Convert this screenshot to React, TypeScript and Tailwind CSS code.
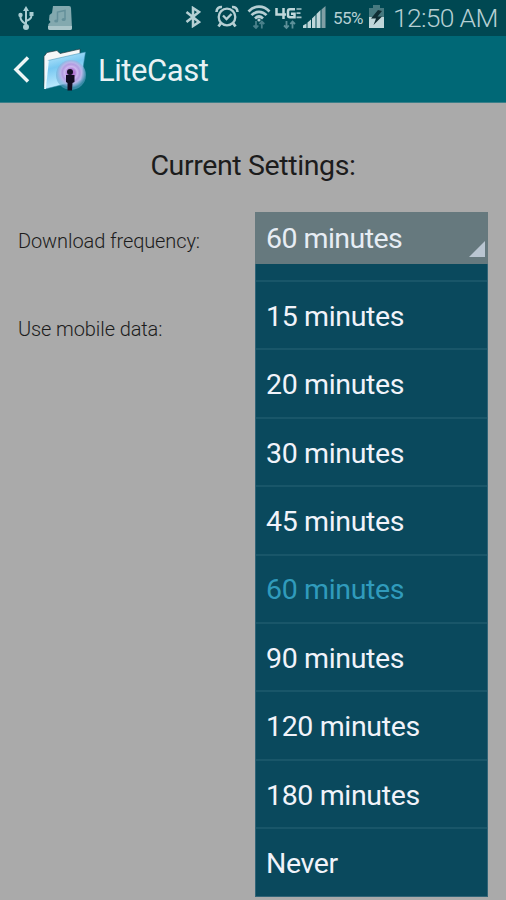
import React, { useState } from 'react';

const options = [
  '15 minutes',
  '20 minutes',
  '30 minutes',
  '45 minutes',
  '60 minutes',
  '90 minutes',
  '120 minutes',
  '180 minutes',
  'Never'
];

const UsbIcon = () => (
  <svg className="w-4 h-6" viewBox="0 0 16 24" fill="none" stroke="#a9cdd2" strokeWidth="2">
    <path d="M8 4v16M8 18C5 16 2.500 15.500 2.500 11M8 15c3.500-1.500 5.500-2.500 5.500-6" />
    <path d="M5 5 8 0l3 5z" fill="#a9cdd2" stroke="none" />
    <circle cx="2.500" cy="9" r="2.200" fill="#a9cdd2" stroke="none" />
    <path d="M11.500 6h4v4h-4z" fill="#a9cdd2" stroke="none" />
    <circle cx="8" cy="21" r="3" fill="#a9cdd2" stroke="none" />
  </svg>
);

const MusicCardIcon = () => (
  <svg className="w-[26px] h-6" viewBox="0 0 26 24">
    <path d="M6 0h16q2 0 2 2l1 20q0 2-2 2H3q-2 0-2-2l.500-4 2-2-1.500-2 .500-5 2.500-2z" fill="#83a9af" />
    <path d="M1 20h24v2q0 2-2 2H3q-2 0-2-2z" fill="#aac5c9" />
    <path d="M10.500 14.500V6l7.500-1.500v8.500" fill="none" stroke="#64909a" strokeWidth="1.500" />
    <ellipse cx="9.200" cy="15" rx="2" ry="1.600" fill="#64909a" />
    <ellipse cx="16.700" cy="13.500" rx="2" ry="1.600" fill="#64909a" />
  </svg>
);

const BluetoothIcon = () => (
  <svg className="w-4 h-[22px]" viewBox="0 0 16 22" fill="none" stroke="#b5cfd3" strokeWidth="2.500">
    <path d="M1.500 6l12.500 10-6 4V2l6 4L1.500 16" />
  </svg>
);

const AlarmIcon = () => (
  <svg className="w-6 h-[23px]" viewBox="0 0 24 23" fill="none" stroke="#b5cfd3" strokeWidth="2.300">
    <circle cx="12" cy="12" r="8.300" />
    <path d="M8 10.500l3.500 3.500 5-5" />
    <path d="M1.500 7C1.500 3.500 4 1.700 7 2M22.500 7c0-3.500-2.500-5.300-5.500-5" strokeWidth="2.600" />
    <path d="M6 18 3.500 21.500M18 18l2.500 3.500" strokeWidth="2.800" />
  </svg>
);

const WifiIcon = () => (
  <svg className="w-6 h-6" viewBox="0 0 24 24" fill="none" stroke="#b5cfd3" strokeWidth="2.600">
    <path d="M1.500 6.500C7.500 0 16.500 0 22.500 6.500M4.500 10.200c4.200-4.500 10.800-4.500 15 0M8 13.500c2.500-2.500 5.500-2.500 8 0" />
    <circle cx="12" cy="15" r="1.600" fill="#b5cfd3" stroke="none" />
    <path d="M9 16v7M6.500 20.500 9 23l2.300-2.500M14.800 23.500v-7M12.500 19l2.300-2.500 2.500 2.500" stroke="#49808a" strokeWidth="1.800" />
  </svg>
);

const LteIcon = () => (
  <svg className="w-[27px] h-6" viewBox="0 0 27 24" fill="none" stroke="#c0d7da" strokeWidth="2.500">
    <path d="M1.500 1v6.500H11M8.500 1v11M20 2.200h-5q-2 0-2 2v4q0 2 2 2h4.500V6.800H16" />
    <path d="M21.500 2h5M21.500 6.200h4M21.500 10.400h5" stroke="#a3c2c7" strokeWidth="1.700" />
    <path d="M11.500 14v7M9 18.500l2.500 2.500 2.300-2.500M17.500 21.500v-7M15.300 17l2.200-2.500 2.500 2.500" stroke="#5d9099" strokeWidth="1.800" />
  </svg>
);

const SignalIcon = () => (
  <svg className="w-[23px] h-[22px]" viewBox="0 0 23 22">
    <path d="M0 22v-2.500l3.500-2V22zM4.500 22v-5.500l3.500-3V22zM9 22V12.500l3.500-3.500V22zM13.500 22V8L17.500 4v18z" fill="#c0d7da" />
    <path d="M18.500 22V3.500L22.500 0v22z" fill="#7f9fa5" />
  </svg>
);

const BatteryIcon = () => (
  <svg className="w-[17px] h-[23px]" viewBox="0 0 17 23">
    <path d="M5 0h7v3h4v10H1V3h4z" fill="#477a80" />
    <path d="M1 12h15v11H1z" fill="#c0d7da" />
    <path d="M10 5 3 13.500h5L5.500 20 14 11.500H9.500L14 6z" fill="#102e34" />
  </svg>
);

const FolderIcon = () => (
  <svg className="w-11 h-[43px]" viewBox="0 0 44 43">
    <defs>
      <linearGradient id="folder" x1="0" y1="0" x2="0.300" y2="1">
        <stop offset="0" stopColor="#c9efff" />
        <stop offset="0.450" stopColor="#78c8f1" />
        <stop offset="1" stopColor="#c7efff" />
      </linearGradient>
      <radialGradient id="waves" cy="0.430">
        <stop offset="0" stopColor="#a650bb" />
        <stop offset="0.300" stopColor="#b68ada" />
        <stop offset="0.420" stopColor="#cdb9ee" />
        <stop offset="0.580" stopColor="#b39be0" />
        <stop offset="0.700" stopColor="#b9b5e8" />
        <stop offset="0.880" stopColor="#8eb4e0" stopOpacity="0.750" />
        <stop offset="1" stopColor="#69a8cf" stopOpacity="0.550" />
      </radialGradient>
    </defs>
    <path d="M1 8.500 4 4.500 14 2.500l3 3L37 1v8L3 41l-2-2z" fill="#f5f7f8" stroke="#263d45" strokeWidth="0.700" />
    <path d="M5 12.500 42.500 4 38 32 2 41z" fill="url(#folder)" stroke="#388bad" strokeWidth="0.500" />
    <path d="M5 12.500 2 41" stroke="#e9faff" strokeWidth="1.800" />
    <circle cx="28" cy="27" r="15" fill="url(#waves)" />
    <circle cx="27" cy="24" r="3" fill="#160e24" />
    <path d="M23 27h8.500v7l-2 1-.500 7.500h-4.500L24.500 35l-1.500-1z" fill="#120c20" />
  </svg>
);

const StatusBar = () => (
  <div className="flex h-9 items-start bg-[#004852] text-[#b5cfd3]">
    <div className="ml-[18px] mt-1.5"><UsbIcon /></div>
    <div className="ml-[13px] mt-1.5"><MusicCardIcon /></div>
    <div className="ml-[112px] mt-1.5"><BluetoothIcon /></div>
    <div className="ml-[14px] mt-[5px]"><AlarmIcon /></div>
    <div className="ml-2 mt-[5px]"><WifiIcon /></div>
    <div className="ml-1 mt-[7px]"><LteIcon /></div>
    <div className="ml-px mt-1.5"><SignalIcon /></div>
    <span className="ml-[7px] mt-2 w-[31px] whitespace-nowrap text-[17px] leading-5 tracking-[-0.6px]">55%</span>
    <div className="ml-1 mt-[5px]"><BatteryIcon /></div>
    <span className="ml-2 mt-[3px] whitespace-nowrap text-[26.500px] font-light leading-[30px] tracking-[-0.7px]">12:50 AM</span>
  </div>
);

const App = () => {
  const [selected, setSelected] = useState('60 minutes');

  return (
    <div className="flex h-[900px] w-[506px] flex-col overflow-hidden bg-[#aaaaaa] font-['Roboto',sans-serif]">
      <StatusBar />

      {/* Action bar */}
      <header className="flex h-[67px] shrink-0 items-start border-b border-[#397f89] bg-[#006876] text-[#e9f2f4]">
        <svg className="ml-[13px] mt-5 h-[27px] w-[17px]" viewBox="0 0 17 27" fill="none" stroke="#edf5f6" strokeWidth="3.500">
          <path d="M15 1.500 3 13.500l12 12" />
        </svg>
        <div className="ml-[13px] mt-3"><FolderIcon /></div>
        <h1 className="ml-[11px] mt-[17px] text-[31px] leading-9 tracking-[-0.45px]">LiteCast</h1>
      </header>

      <main className="flex-1">
        <h2 className="mt-[45px] text-center text-[28.500px] leading-9 tracking-[-0.37px] text-[#1c1c1c]">Current Settings:</h2>

        <div className="mt-7 flex justify-between pl-[18px] pr-[18px] text-[#1c1c1c]">
          <div className="text-xl font-light leading-6 tracking-[-0.1px]">
            <p className="mt-[17px]">Download frequency:</p>
            <p className="mt-16">Use mobile data:</p>
          </div>

          <div className="relative h-[52px] w-[233px] bg-[#66797e]">
            <button className="block h-full w-full pl-[11px] pt-[3px] text-left text-[28.500px] tracking-[-0.55px] text-[#e7edf4]">
              {selected}
            </button>
            <svg className="absolute bottom-[7px] right-[3px] h-4 w-4" viewBox="0 0 16 16">
              <path d="M16 0v16H0z" fill="#bac6d2" />
            </svg>

            {/* Dropdown list */}
            <ul className="absolute left-0 top-full w-full border-x border-b border-[#316477] bg-[#0a495d] pt-4">
              {options.map((option) => (
                <li
                  key={option}
                  onClick={() => setSelected(option)}
                  className={`flex h-[68.400px] items-center border-t-2 border-[#195669] pl-2.5 pt-1 text-[28.500px] tracking-[-0.35px] ${
                    option === selected ? 'text-[#309bbc]' : 'text-[#f1f3fa]'
                  }`}
                >
                  {option}
                </li>
              ))}
            </ul>
          </div>
        </div>
      </main>
    </div>
  );
};

export default App;
